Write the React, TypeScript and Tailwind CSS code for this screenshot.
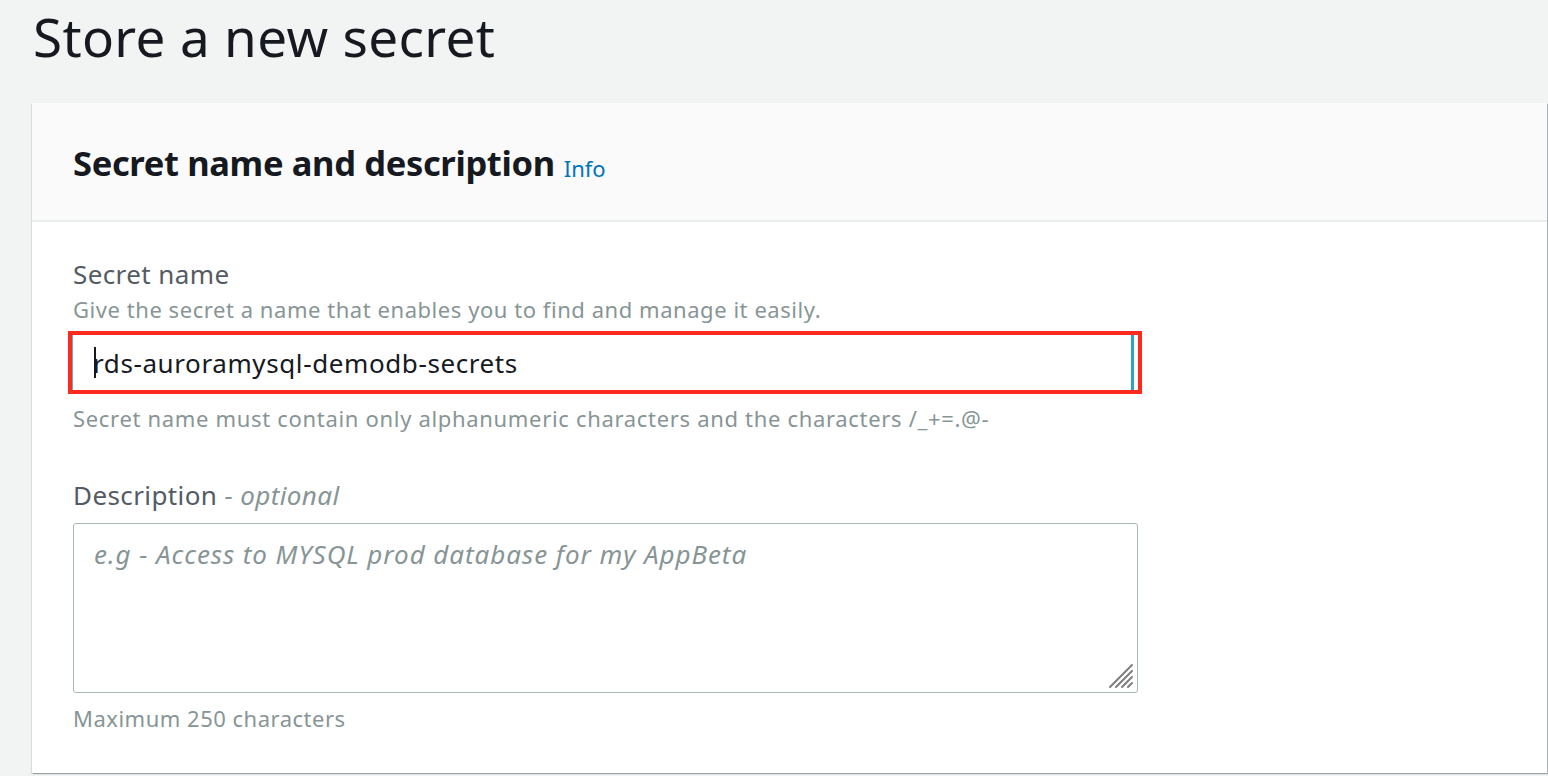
import React from "react";

export default function App() {
  const font = { fontFamily: '"Noto Sans", "Open Sans", sans-serif' };
  return (
    <div
      className="w-[1548px] h-[776px] overflow-hidden bg-[#f2f3f3] text-[#16191f]"
      style={font}
    >
      <div className="pl-[33px] pt-[3px] pb-[32px]">
        <h1 className="text-[53px] leading-[68px] font-normal text-[#16191f] tracking-[0.35px] whitespace-nowrap">
          Store a new secret
        </h1>
      </div>
      <div className="ml-[32px] mr-[1px] bg-white shadow-[1px_1px_1px_0_rgba(0,28,36,0.3),-1px_1px_1px_0_rgba(0,28,36,0.1)] h-[670px]">
        <div className="h-[119px] bg-[#fafafa] border-b-2 border-[#eaeded] pl-[41px] flex items-center pt-[4px]">
          <h2 className="text-[34.5px] font-bold text-[#16191f] leading-none tracking-[-0.35px]">
            Secret name and description
          </h2>
          <a className="ml-[9px] mt-[8px] text-[22px] text-[#0073bb] leading-none">Info</a>
        </div>
        <div className="pl-[41px] pt-[36px]">
          <div className="text-[26px] leading-[32px] text-[#545b64] tracking-[0.4px]">Secret name</div>
          <div className="mt-[4px] text-[22px] leading-[30px] text-[#879596] tracking-[0.55px]">
            Give the secret a name that enables you to find and manage it easily.
          </div>
          <div className="-ml-[5px] mt-[7px] w-[1074px] h-[63px] border-[4px] border-[#ff2a1e] bg-white">
            <div className="h-full border-l border-[#44b9d6] border-r-[3px] border-r-[#2e9fc9] mr-[4px] flex items-center pl-[20px] relative">
              <span className="absolute left-[21px] top-[12px] w-[2px] h-[31px] bg-[#16191f]" />
              <span className="text-[26px] leading-none text-[#16191f] tracking-[0.6px]">rds-auroramysql-demodb-secrets</span>
            </div>
          </div>
          <div className="mt-[9px] text-[22px] leading-[30px] text-[#879596] tracking-[0.68px]">
            Secret name must contain only alphanumeric characters and the characters /_+=.@-
          </div>
          <div className="mt-[46px] text-[26px] leading-[32px] text-[#545b64] tracking-[0.4px]">
            Description <span className="italic text-[#879596]">- optional</span>
          </div>
          <div className="mt-[12px] w-[1065px] h-[170px] border border-[#aab7b8] rounded-[3px] relative">
            <div className="pl-[20px] pt-[14px] text-[26px] italic text-[#879596] leading-[32px] tracking-[0.93px]">
              e.g - Access to MYSQL prod database for my AppBeta
            </div>
            <svg className="absolute right-[3px] bottom-[3px]" width="26" height="26" viewBox="0 0 26 26">
              <g stroke="#7d7d7d" strokeWidth="2" strokeLinecap="round">
                <line x1="2" y1="24" x2="24" y2="2" />
                <line x1="8" y1="24" x2="24" y2="8" />
                <line x1="14" y1="24" x2="24" y2="14" />
                <line x1="20" y1="24" x2="24" y2="20" />
              </g>
            </svg>
          </div>
          <div className="mt-[10px] text-[22px] leading-[30px] text-[#879596] tracking-[0.5px]">Maximum 250 characters</div>
        </div>
      </div>
    </div>
  );
}
